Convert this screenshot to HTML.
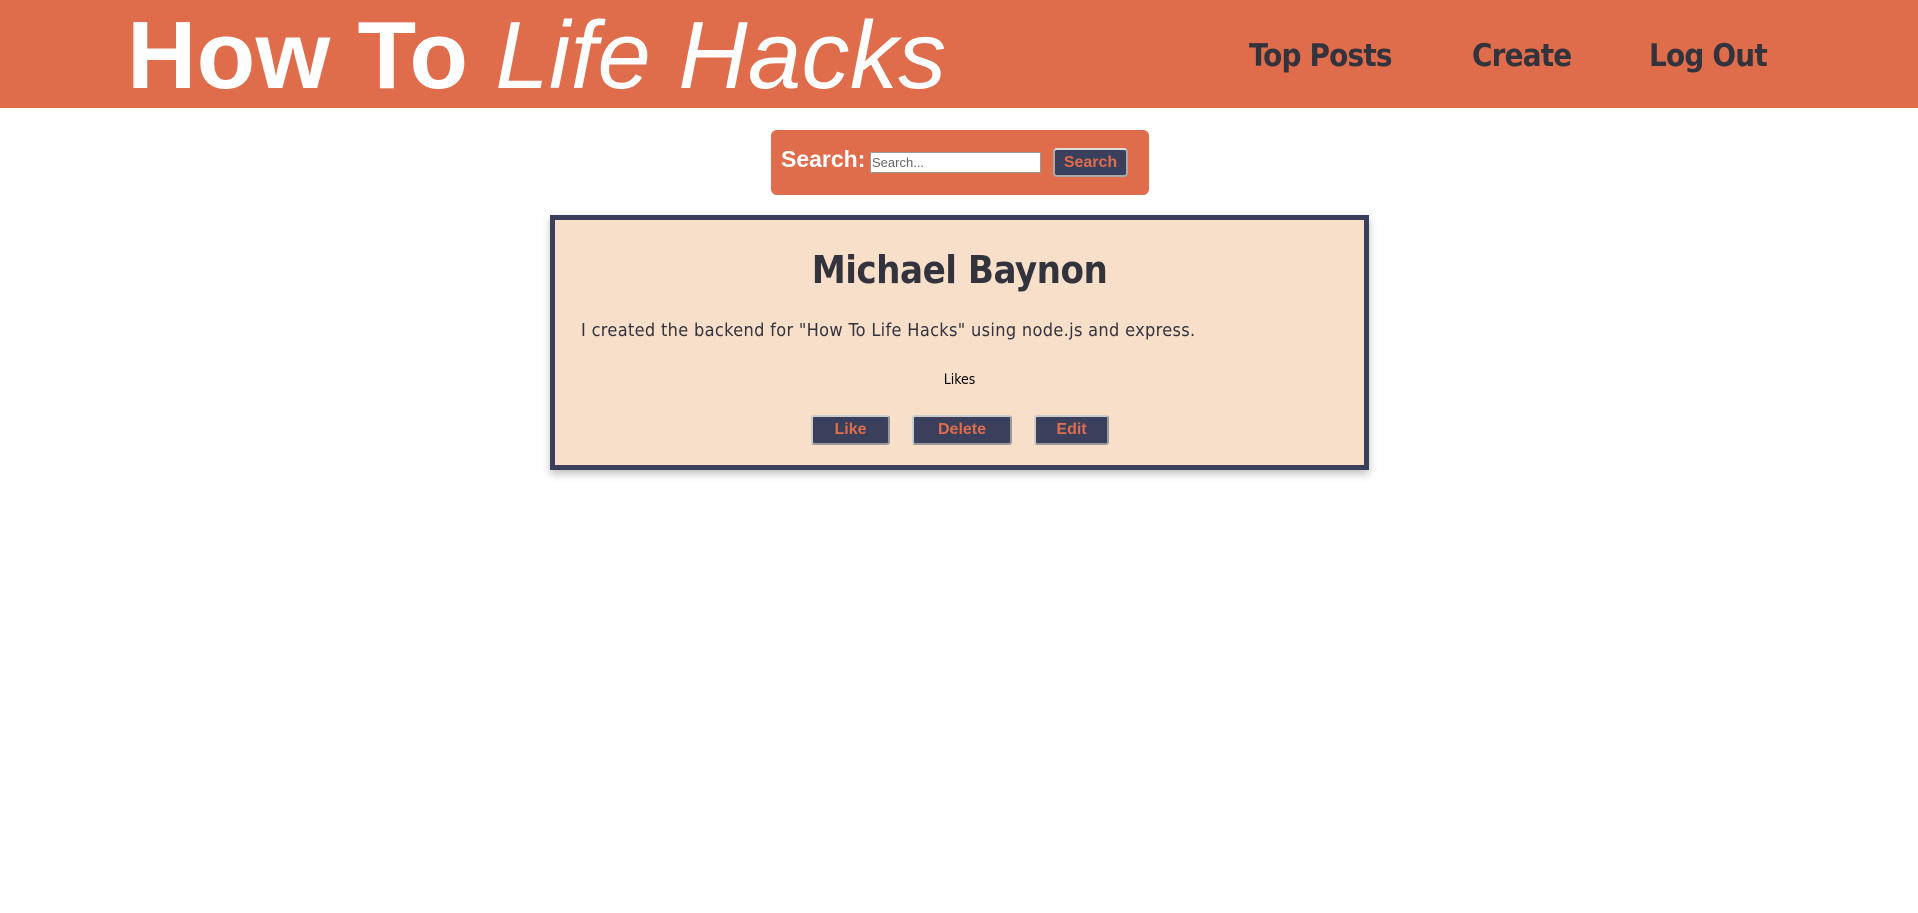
<!DOCTYPE html>
<html><head><meta charset="utf-8"><style>
*{box-sizing:border-box}
body{margin:0;width:1918px;height:913px;background:#fff;font-family:"Liberation Sans",sans-serif;overflow:hidden;position:relative}
.hdr{position:absolute;left:0;top:0;width:1918px;height:108px;background:#df6d4c}
.title{position:absolute;left:127px;top:2px;font-size:96px;line-height:108px;color:#fff;font-weight:bold;white-space:nowrap;letter-spacing:0.3px}
.title i{font-weight:normal}
.nav{position:absolute;top:38px;font-size:31px;font-weight:bold;color:#33333d;font-family:"DejaVu Sans Condensed","Liberation Sans",sans-serif;white-space:nowrap;letter-spacing:-0.8px}
.sbox{position:absolute;left:771px;top:130px;width:378px;height:65px;background:#df6d4c;border-radius:6px}
.slab{position:absolute;left:10px;top:16px;font-size:23px;font-weight:bold;color:#fff}
.sin{position:absolute;left:99px;top:22px;width:171px;height:21px;background:#fff;border:1px solid #999;font-size:13px;color:#666;padding:2px 1px;line-height:15px}
.sbtn{position:absolute;left:282px;top:18px;width:75px;height:29px;background:#3a3f5c;border:2px solid #aaa;border-top-color:#ddd;border-radius:4px;color:#df6d4c;font-weight:bold;font-size:16px;text-align:center;line-height:25px}
.card{position:absolute;left:550px;top:215px;width:819px;height:255px;background:#f8dfca;border:5px solid #3a3f5c;box-shadow:0 4px 8px rgba(0,0,0,.25)}
.card h1{position:absolute;left:0;right:0;top:28px;margin:0;text-align:center;font-size:38px;color:#33333d;font-family:"DejaVu Sans Condensed","Liberation Sans",sans-serif;letter-spacing:-0.5px}
.card p{position:absolute;left:26px;top:100px;margin:0;font-size:18px;color:#33333d;font-family:"DejaVu Sans Condensed","Liberation Sans",sans-serif;letter-spacing:0.33px}
.likes{position:absolute;left:0;right:0;top:152px;text-align:center;font-size:14px;font-family:"DejaVu Sans Condensed",sans-serif}
.b{position:absolute;top:195px;height:30px;background:#3a3f5c;border:2px solid #999;border-top-color:#ccc;border-left-color:#ccc;border-radius:3px;color:#df6d4c;font-weight:bold;font-size:16px;text-align:center;line-height:26px}
</style></head><body>
<div class="hdr">
<div class="title">How To <i>Life Hacks</i></div>
<div class="nav" style="left:1249px">Top Posts</div>
<div class="nav" style="left:1472px">Create</div>
<div class="nav" style="left:1649px">Log Out</div>
</div>
<div class="sbox"><div class="slab">Search:</div><div class="sin">Search...</div><div class="sbtn">Search</div></div>
<div class="card">
<h1>Michael Baynon</h1>
<p>I created the backend for "How To Life Hacks" using node.js and express.</p>
<div class="likes">Likes</div>
<div class="b" style="left:256px;width:79px">Like</div>
<div class="b" style="left:357px;width:100px">Delete</div>
<div class="b" style="left:479px;width:75px">Edit</div>
</div>
</body></html>
